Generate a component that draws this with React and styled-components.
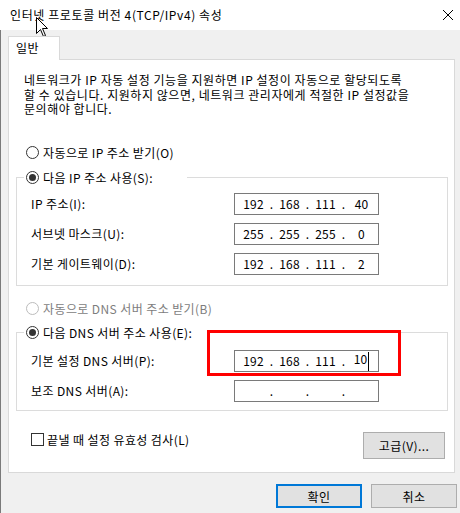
import React from 'react';
import styled, { createGlobalStyle } from 'styled-components';

const GlobalStyle = createGlobalStyle`
  html, body {
    margin: 0;
    padding: 0;
  }
  body {
    width: 460px;
    height: 513px;
    overflow: hidden;
    background: #f0f0f0;
    font-family: "Noto Sans CJK KR", "Noto Sans", sans-serif;
    font-size: 12px;
    letter-spacing: 0.4px;
    color: #000;
  }
`;

const Window = styled.div`
  position: relative;
  width: 460px;
  height: 513px;
  display: flex;
  flex-direction: column;
  background: #f0f0f0;
`;

const TitleBar = styled.div`
  flex: none;
  height: 30px;
  box-sizing: border-box;
  padding: 0 6px 0 10px;
  display: flex;
  align-items: center;
  justify-content: space-between;
  background: #fff;
`;

const Title = styled.span`
  line-height: 16px;
  white-space: nowrap;
  letter-spacing: 0.6px;
`;

const Body = styled.div`
  flex: 1;
  border-left: 1px solid #7a7a7a;
  padding: 6px 5px 0 7px;
  display: flex;
  flex-direction: column;
`;

const TabStrip = styled.div`
  display: flex;
`;

const Tab = styled.div`
  position: relative;
  z-index: 1;
  width: 52px;
  height: 24px;
  box-sizing: border-box;
  margin-bottom: -1px;
  padding-left: 7px;
  border: 1px solid #d9d9d9;
  border-bottom: none;
  background: #fff;
  line-height: 22px;
`;

const Panel = styled.div`
  height: 414px;
  box-sizing: border-box;
  padding: 13px 6px 0 7px;
  border: 1px solid #d9d9d9;
  background: #fff;
  display: flex;
  flex-direction: column;
`;

const Intro = styled.p`
  margin: 0 0 0 8px;
  line-height: 14.5px;
  white-space: nowrap;
  letter-spacing: 0.55px;
`;

const RadioRow = styled.label`
  display: flex;
  align-items: center;
  gap: 4px;
  height: 16px;
  margin: ${p => p.$mt || 0}px 0 0 ${p => p.$ml ?? 10}px;
  color: ${p => (p.$disabled ? '#7d7d7d' : '#000')};
  white-space: nowrap;
`;

const RadioCircle = styled.span`
  flex: none;
  width: 13px;
  height: 13px;
  box-sizing: border-box;
  border: 1px solid ${p => (p.$disabled ? '#bcbcbc' : '#333')};
  border-radius: 50%;
  background: #fff;
  display: flex;
  align-items: center;
  justify-content: center;

  &::after {
    content: '';
    display: ${p => (p.$checked ? 'block' : 'none')};
    width: 7px;
    height: 7px;
    border-radius: 50%;
    background: #333;
  }
`;

const Group = styled.fieldset`
  min-width: 0;
  margin: ${p => p.$mt}px 0 0 0;
  padding: ${p => p.$pt}px 0 ${p => p.$pb}px 0;
  border: 1px solid #dcdcdc;
  display: flex;
  flex-direction: column;
  gap: 8px;
`;

const Legend = styled.legend`
  width: ${p => p.$w}px;
  height: 16px;
  box-sizing: border-box;
  margin-left: 7px;
  padding: 0 0 0 2px;
`;

const FieldRow = styled.div`
  display: flex;
  align-items: center;
  height: 22px;
  padding-left: 14px;
`;

const FieldLabel = styled.span`
  width: 203px;
  white-space: nowrap;
`;

const IpBox = styled.div`
  width: 145px;
  height: 22px;
  box-sizing: border-box;
  padding-left: 4px;
  border: 1px solid #7a7a7a;
  background: #fff;
  display: flex;
  align-items: center;
  letter-spacing: 0.2px;
`;

const Octet = styled.span`
  width: 29px;
  text-align: center;
  white-space: nowrap;
`;

const Dot = styled.span`
  width: 7px;
  text-align: center;
`;

const Caret = styled.span`
  display: inline-block;
  width: 1px;
  height: 19px;
  margin-left: 1px;
  vertical-align: middle;
  background: #000;
`;

const BottomRow = styled.div`
  display: flex;
  justify-content: space-between;
  align-items: flex-start;
  margin-top: 21px;
`;

const CheckRow = styled.label`
  display: flex;
  align-items: center;
  gap: 3px;
  margin: 1px 0 0 15px;
  height: 14px;
  white-space: nowrap;
`;

const CheckBox = styled.span`
  width: 13px;
  height: 13px;
  box-sizing: border-box;
  border: 1px solid #333;
  background: #fff;
`;

const Button = styled.button`
  width: ${p => p.$w || 86}px;
  height: ${p => p.$h || 24}px;
  box-sizing: border-box;
  margin: 0 ${p => p.$mr || 0}px 0 0;
  padding: 0;
  border: ${p => (p.$primary ? '2px solid #0078d7' : '1px solid #adadad')};
  background: #e1e1e1;
  font-family: inherit;
  font-size: 12px;
  letter-spacing: inherit;
  color: #000;
`;

const Footer = styled.div`
  display: flex;
  justify-content: flex-end;
  gap: 9px;
  margin: 11px -2px 0 0;
`;

const Highlight = styled.div`
  position: absolute;
  left: 207px;
  top: 330px;
  width: 194px;
  height: 46px;
  box-sizing: border-box;
  border: 3px solid #ff0000;
  pointer-events: none;
`;

const Pointer = styled.svg`
  position: absolute;
  left: 36px;
  top: 17px;
`;

const Radio = ({ checked, disabled, children, ml, mt }) => (
  <RadioRow $disabled={disabled} $ml={ml} $mt={mt}>
    <RadioCircle $checked={checked} $disabled={disabled} />
    {children}
  </RadioRow>
);

const IpField = ({ value, caret }) => {
  const parts = value ? value.split('.') : ['', '', '', ''];
  return (
    <IpBox>
      {parts.map((p, i) => (
        <React.Fragment key={i}>
          {i > 0 && <Dot>.</Dot>}
          <Octet>
            {p}
            {caret && i === 3 && <Caret />}
          </Octet>
        </React.Fragment>
      ))}
    </IpBox>
  );
};

const Field = ({ label, value, caret }) => (
  <FieldRow>
    <FieldLabel>{label}</FieldLabel>
    <IpField value={value} caret={caret} />
  </FieldRow>
);

export default function App() {
  return (
    <>
      <GlobalStyle />
      <Window>
        <TitleBar>
          <Title>인터넷 프로토콜 버전 4(TCP/IPv4) 속성</Title>
          <svg width="12" height="12" viewBox="0 0 12 12">
            <path d="M1 1 L11 11 M11 1 L1 11" stroke="#000" strokeWidth="1" fill="none" />
          </svg>
        </TitleBar>
        <Body>
          <TabStrip>
            <Tab>일반</Tab>
          </TabStrip>
          <Panel>
            <Intro>
              네트워크가 IP 자동 설정 기능을 지원하면 IP 설정이 자동으로 할당되도록
              <br />
              할 수 있습니다. 지원하지 않으면, 네트워크 관리자에게 적절한 IP 설정값을
              <br />
              문의해야 합니다.
            </Intro>
            <Radio mt={28}>자동으로 IP 주소 받기(O)</Radio>
            <Group $mt={9} $pt={7} $pb={10}>
              <Legend $w={163}>
                <Radio checked ml={0}>다음 IP 주소 사용(S):</Radio>
              </Legend>
              <Field label="IP 주소(I):" value="192.168.111.40" />
              <Field label="서브넷 마스크(U):" value="255.255.255.0" />
              <Field label="기본 게이트웨이(D):" value="192.168.111.2" />
            </Group>
            <Radio disabled mt={15}>자동으로 DNS 서버 주소 받기(B)</Radio>
            <Group $mt={8} $pt={9} $pb={8}>
              <Legend $w={186}>
                <Radio checked ml={0}>다음 DNS 서버 주소 사용(E):</Radio>
              </Legend>
              <Field label="기본 설정 DNS 서버(P):" value="192.168.111.10" caret />
              <Field label="보조 DNS 서버(A):" />
            </Group>
            <BottomRow>
              <CheckRow>
                <CheckBox />
                끝낼 때 설정 유효성 검사(L)
              </CheckRow>
              <Button $w={82} $h={27} $mr={3}>고급(V)...</Button>
            </BottomRow>
          </Panel>
          <Footer>
            <Button $primary>확인</Button>
            <Button>취소</Button>
          </Footer>
        </Body>
        <Highlight />
        <Pointer width="13" height="21" viewBox="0 0 13 21">
          <path
            d="M0.5 0.5 L0.5 16.5 L4.5 12.5 L7.5 19.5 L9.5 18.5 L6.5 11.5 L11.5 11.5 Z"
            fill="#fff"
            stroke="#000"
            strokeWidth="1"
          />
        </Pointer>
      </Window>
    </>
  );
}
